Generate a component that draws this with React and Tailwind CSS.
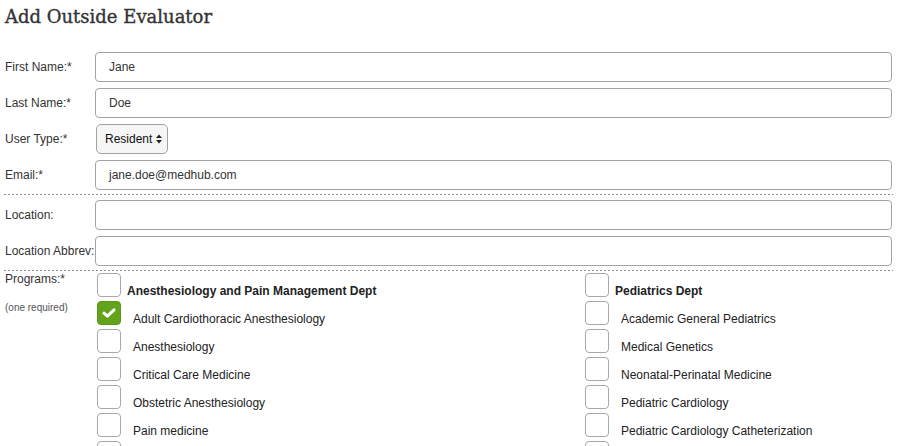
import React from "react";

const sans = { fontFamily: '"Liberation Sans", Arial, sans-serif' };

function Row({ label, children, labelClass = "" }) {
  return (
    <div className="flex items-start py-[3px]">
      <div className={"w-[90px] shrink-0 pt-[8px] text-[12px] leading-[14px] text-[#333] " + labelClass}>{label}</div>
      <div className="flex-1">{children}</div>
    </div>
  );
}

function TextInput({ value = "" }) {
  return (
    <div className="h-[30px] w-full rounded-[4px] border border-[#a3a3a3] bg-white pl-[13px] flex items-center text-[12px] text-[#333]">
      {value}
    </div>
  );
}

function Dashed() {
  return <div className="ml-[4px] h-px w-[889px] bg-[linear-gradient(to_right,#8a8a8a_2px,transparent_2px)] bg-[length:4px_1px]" />;
}

function Box({ checked }) {
  if (checked) {
    return (
      <div className="h-[24px] w-[24px] shrink-0 rounded-[4px] bg-[#63a31b] border border-[#5b9617] flex items-center justify-center">
        <svg width="14" height="12" viewBox="0 0 14 12">
          <path d="M2 6.2 L5.4 9.2 L12 2.8" fill="none" stroke="#fff" strokeWidth="3" strokeLinecap="round" strokeLinejoin="round" />
        </svg>
      </div>
    );
  }
  return <div className="h-[24px] w-[24px] shrink-0 rounded-[4px] border border-[#a8a8a8] bg-white" />;
}

function Program({ label, header, checked }) {
  return (
    <div className="flex items-end h-[28px] pt-[2px] pb-[2px]">
      <Box checked={checked} />
      <span
        className={
          "text-[12px] leading-[14px] text-[#222] whitespace-nowrap mb-[-1px] " +
          (header ? "font-bold ml-[6px]" : "ml-[12px]")
        }
      >
        {label}
      </span>
    </div>
  );
}

const left = [
  ["Anesthesiology and Pain Management Dept", true, false],
  ["Adult Cardiothoracic Anesthesiology", false, true],
  ["Anesthesiology", false, false],
  ["Critical Care Medicine", false, false],
  ["Obstetric Anesthesiology", false, false],
  ["Pain medicine", false, false],
];
const right = [
  ["Pediatrics Dept", true, false],
  ["Academic General Pediatrics", false, false],
  ["Medical Genetics", false, false],
  ["Neonatal-Perinatal Medicine", false, false],
  ["Pediatric Cardiology", false, false],
  ["Pediatric Cardiology Catheterization", false, false],
];

function PartialBox() {
  return <div className="mt-[2px] h-[24px] w-[24px] rounded-[4px] border border-[#a8a8a8] bg-white" />;
}

export default function App() {
  return (
    <div className="h-[446px] w-[897px] overflow-hidden bg-white" style={sans}>
      <div className="pl-[5px] pr-[5px]">
        <h1
          className="pt-[5px] h-[49px] text-[18px] leading-[24px] text-[#333] [-webkit-text-stroke:0.35px_#333]"
          style={{ fontFamily: '"DejaVu Serif", "Liberation Serif", serif' }}
        >
          Add Outside Evaluator
        </h1>
        <Row label="First Name:*">
          <TextInput value="Jane" />
        </Row>
        <Row label="Last Name:*">
          <TextInput value="Doe" />
        </Row>
        <Row label="User Type:*">
          <div className="ml-[1px] h-[30px] w-[72px] rounded-[5px] border border-[#a3a3a3] bg-[#f6f6f6] flex items-center pl-[8px] text-[12px] text-[#111]">
            <span>Resident</span>
            <svg className="ml-[4px]" width="6" height="10" viewBox="0 0 6 10">
              <path d="M0 4 L3 0.5 L6 4 Z M0 6 L3 9.5 L6 6 Z" fill="#222" />
            </svg>
          </div>
        </Row>
        <Row label="Email:*">
          <TextInput value="jane.doe@medhub.com" />
        </Row>
      </div>
      <div className="mt-[1px]">
        <Dashed />
      </div>
      <div className="pl-[5px] pr-[5px] pt-[2px]">
        <Row label="Location:">
          <TextInput />
        </Row>
        <Row label="Location Abbrev:" labelClass="whitespace-nowrap">
          <TextInput />
        </Row>
      </div>
      <div className="mt-[1px]">
        <Dashed />
      </div>
      <div className="pl-[5px] flex">
        <div className="w-[90px] shrink-0 pt-[1px]">
          <div className="text-[12px] leading-[14px] text-[#333]">Programs:*</div>
          <div className="mt-[16px] text-[10px] leading-[12px] text-[#555]">(one required)</div>
        </div>
        <div className="flex pl-[2px]">
          <div className="w-[488px]">
            {left.map(([l, h, c]) => (
              <Program key={l} label={l} header={h} checked={c} />
            ))}
            <PartialBox />
          </div>
          <div>
            {right.map(([l, h, c]) => (
              <Program key={l} label={l} header={h} checked={c} />
            ))}
            <PartialBox />
          </div>
        </div>
      </div>
    </div>
  );
}
